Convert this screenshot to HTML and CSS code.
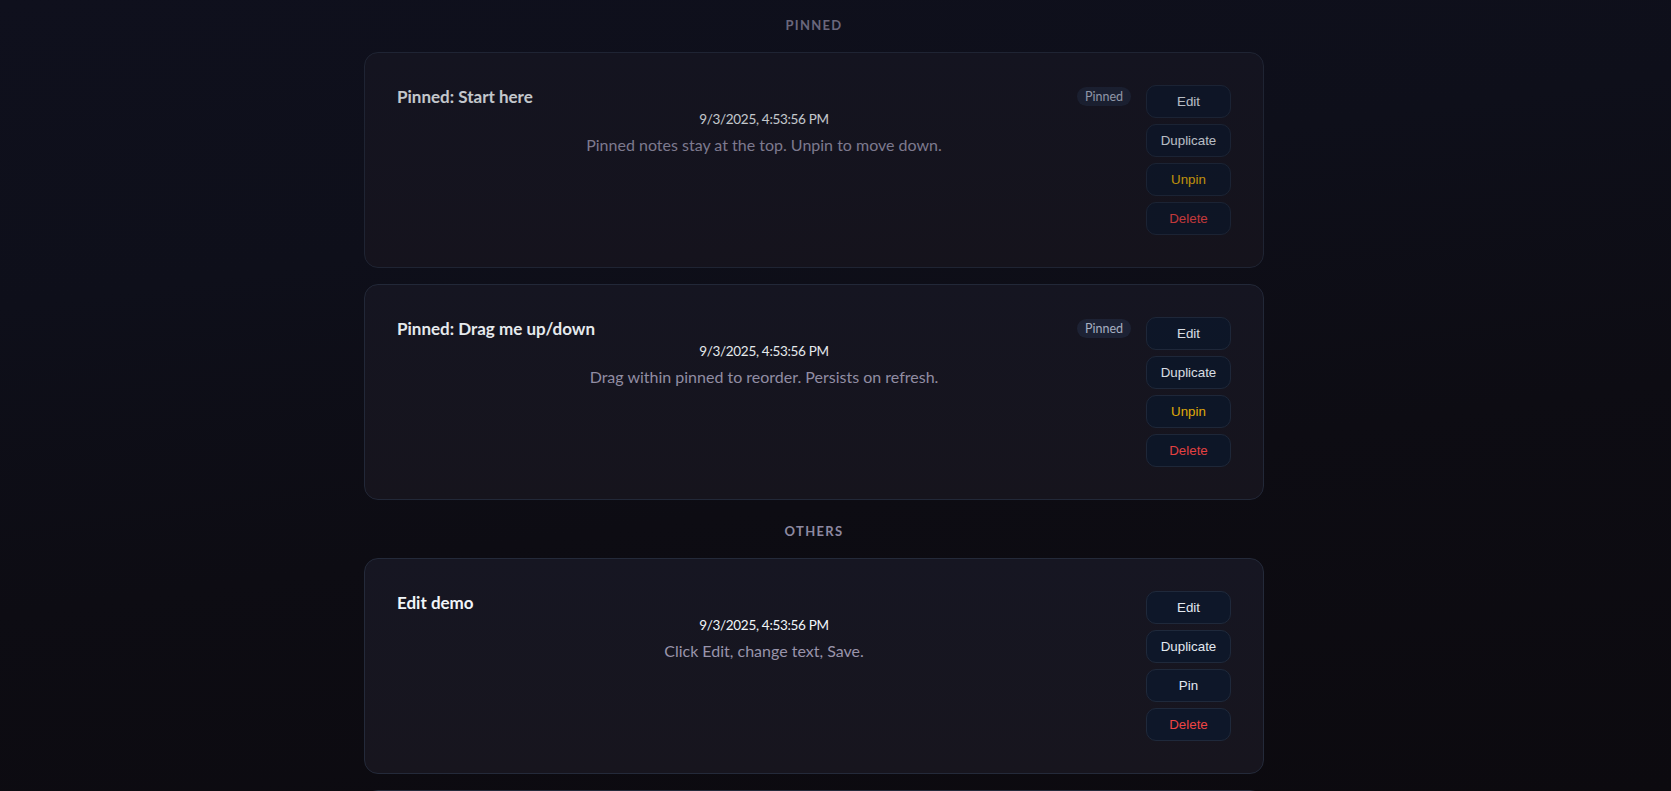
FILE: index.html
```html
<!DOCTYPE html>
<html lang="en">
<head>
<meta charset="utf-8">
<title>Notes</title>
<link rel="stylesheet" href="styles.css">
</head>
<body>
<div class="page">
  <main class="notes">
    <section class="group group-pinned">
      <h2 class="group-title fade-1">Pinned</h2>
      <div class="card-list">
        <article class="card fade-2">
          <div class="card-body">
            <div class="card-head">
              <h3 class="card-title">Pinned: Start here</h3>
              <span class="badge">Pinned</span>
            </div>
            <div class="card-date">9/3/2025, 4:53:56 PM</div>
            <p class="card-text">Pinned notes stay at the top. Unpin to move down.</p>
          </div>
          <div class="card-actions">
            <button class="btn">Edit</button>
            <button class="btn">Duplicate</button>
            <button class="btn btn-warn">Unpin</button>
            <button class="btn btn-danger">Delete</button>
          </div>
        </article>
        <article class="card fade-3">
          <div class="card-body">
            <div class="card-head">
              <h3 class="card-title">Pinned: Drag me up/down</h3>
              <span class="badge">Pinned</span>
            </div>
            <div class="card-date">9/3/2025, 4:53:56 PM</div>
            <p class="card-text">Drag within pinned to reorder. Persists on refresh.</p>
          </div>
          <div class="card-actions">
            <button class="btn">Edit</button>
            <button class="btn">Duplicate</button>
            <button class="btn btn-warn">Unpin</button>
            <button class="btn btn-danger">Delete</button>
          </div>
        </article>
      </div>
    </section>
    <section class="group">
      <h2 class="group-title">Others</h2>
      <div class="card-list">
        <article class="card">
          <div class="card-body">
            <div class="card-head">
              <h3 class="card-title">Edit demo</h3>
            </div>
            <div class="card-date">9/3/2025, 4:53:56 PM</div>
            <p class="card-text">Click Edit, change text, Save.</p>
          </div>
          <div class="card-actions">
            <button class="btn">Edit</button>
            <button class="btn">Duplicate</button>
            <button class="btn">Pin</button>
            <button class="btn btn-danger">Delete</button>
          </div>
        </article>
        <article class="card card-peek" aria-hidden="true"></article>
      </div>
    </section>
  </main>
</div>
</body>
</html>
```
FILE: styles.css
```css
* { box-sizing: border-box; }

html, body {
  margin: 0;
  height: 100%;
}

body {
  background: linear-gradient(172deg, #0f101d 0%, #0e0f1a 30%, #0d0c13 60%, #0c0a0f 100%);
  background-attachment: fixed;
  color: #e2e8f0;
  font-family: Lato, "Noto Sans", sans-serif;
  overflow: hidden;
}

.page {
  display: flex;
  justify-content: center;
  padding: 16px 43px 40px 0;
}

.notes {
  width: 900px;
  display: flex;
  flex-direction: column;
  gap: 22px;
}

.group-title {
  margin: 0 0 18px;
  text-align: center;
  font-size: 13px;
  line-height: 18px;
  font-weight: 700;
  letter-spacing: 0.1em;
  text-transform: uppercase;
  color: #8d89a1;
}

.fade-1 { opacity: 0.72; }
.fade-2 { opacity: 0.8; }
.fade-3 { opacity: 0.95; }

.card-list {
  display: flex;
  flex-direction: column;
  gap: 16px;
}

.card {
  display: flex;
  gap: 15px;
  padding: 32px;
  border: 1px solid #242a3a;
  border-radius: 14px;
  background: linear-gradient(180deg, #161622 0%, #17151e 100%);
}

.card-peek {
  height: 216px;
}

.card-body {
  flex: 1;
  min-width: 0;
}

.card-head {
  display: flex;
  align-items: center;
  justify-content: space-between;
  height: 24px;
}

.card-title {
  margin: 0;
  font-size: 17px;
  line-height: 24px;
  font-weight: 700;
  color: #f1f5f9;
}

.badge {
  display: inline-flex;
  align-items: center;
  height: 19px;
  padding: 0 8px;
  border-radius: 999px;
  background: #1e2436;
  color: #b0b8ca;
  font-size: 12.5px;
  margin-top: -2px;
}

.card-date {
  text-align: center;
  font-size: 13.5px;
  line-height: 20px;
  letter-spacing: -0.3px;
  color: #f1f5f9;
}

.card-text {
  margin: 4px 0 0;
  text-align: center;
  font-size: 16px;
  line-height: 24px;
  color: #9994ab;
}

.card-actions {
  display: flex;
  flex-direction: column;
  gap: 6px;
  width: 85px;
  flex: none;
}

.btn {
  height: 33px;
  padding: 0;
  border: 1px solid #1f293b;
  border-radius: 10px;
  background: #0e1729;
  color: #e2e8f0;
  font-family: "Liberation Sans", Arial, sans-serif;
  font-size: 13.333px;
  cursor: pointer;
}

.btn-warn { color: #eab308; }
.btn-danger { color: #ef4444; }
```
